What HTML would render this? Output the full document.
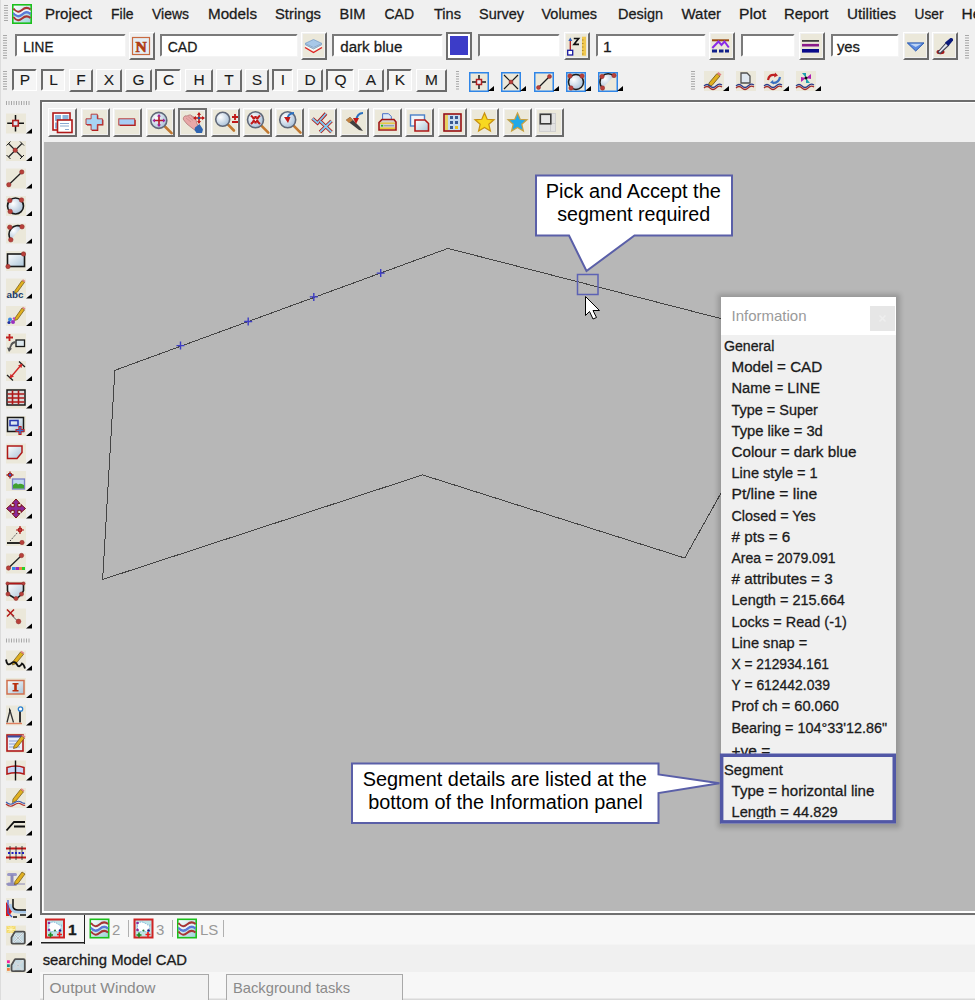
<!DOCTYPE html><html><head><meta charset="utf-8"><style>html,body{margin:0;padding:0;background:#f0f0f0;overflow:hidden}svg{display:block}text{font-family:"Liberation Sans",sans-serif}</style></head><body>
<svg width="975" height="1000" viewBox="0 0 975 1000">
<defs><linearGradient id="gb" x1="0" y1="0" x2="1" y2="1"><stop offset="0" stop-color="#ffffff"/><stop offset="1" stop-color="#a9c4d8"/></linearGradient><radialGradient id="gs" cx="0.35" cy="0.35" r="0.7"><stop offset="0" stop-color="#ffffff"/><stop offset="1" stop-color="#a8c0d8"/></radialGradient><linearGradient id="gw" x1="0" y1="0" x2="1" y2="1"><stop offset="0" stop-color="#ffffff"/><stop offset="1" stop-color="#9ad0d8"/></linearGradient><filter id="sh" x="-10%" y="-10%" width="120%" height="120%"><feGaussianBlur stdDeviation="2.5"/></filter></defs>
<rect x="0" y="0" width="975" height="1000" fill="#f0f0f0"/>
<rect x="0" y="0" width="1" height="1000" fill="#dcdcdc"/>
<rect x="4" y="5" width="4" height="1" fill="#a8a8a8"/>
<rect x="4" y="7.5" width="4" height="1" fill="#a8a8a8"/>
<rect x="4" y="10.0" width="4" height="1" fill="#a8a8a8"/>
<rect x="4" y="12.5" width="4" height="1" fill="#a8a8a8"/>
<rect x="4" y="15.0" width="4" height="1" fill="#a8a8a8"/>
<rect x="4" y="17.5" width="4" height="1" fill="#a8a8a8"/>
<rect x="4" y="20.0" width="4" height="1" fill="#a8a8a8"/>
<g transform="translate(12 4) scale(1.0)"><rect x="0.8" y="0.8" width="18.4" height="18.4" fill="url(#gw)" stroke="#1cc01c" stroke-width="1.6"/><path d="M1.5 4.5Q5.5 10 10 6T18.5 5.5" fill="none" stroke="#a83434" stroke-width="2"/><path d="M1.5 9Q5.5 14.5 10 10.5T18.5 10" fill="none" stroke="#5a7ad8" stroke-width="2.4"/><path d="M1.5 6.8Q5.5 12.3 10 8.3T18.5 7.8" fill="none" stroke="#f4f4f4" stroke-width="1.2"/><path d="M1.5 13Q5.5 18.5 10 14.5T18.5 14" fill="none" stroke="#a83434" stroke-width="2"/></g>
<text x="45" y="19" font-size="15.5" fill="#1b1b1b" stroke="#1b1b1b" stroke-width="0.3" textLength="47" lengthAdjust="spacingAndGlyphs">Project</text>
<text x="111" y="19" font-size="15.5" fill="#1b1b1b" stroke="#1b1b1b" stroke-width="0.3" textLength="22.5" lengthAdjust="spacingAndGlyphs">File</text>
<text x="152" y="19" font-size="15.5" fill="#1b1b1b" stroke="#1b1b1b" stroke-width="0.3" textLength="37" lengthAdjust="spacingAndGlyphs">Views</text>
<text x="208" y="19" font-size="15.5" fill="#1b1b1b" stroke="#1b1b1b" stroke-width="0.3" textLength="49" lengthAdjust="spacingAndGlyphs">Models</text>
<text x="275" y="19" font-size="15.5" fill="#1b1b1b" stroke="#1b1b1b" stroke-width="0.3" textLength="46" lengthAdjust="spacingAndGlyphs">Strings</text>
<text x="339.5" y="19" font-size="15.5" fill="#1b1b1b" stroke="#1b1b1b" stroke-width="0.3" textLength="26" lengthAdjust="spacingAndGlyphs">BIM</text>
<text x="384.5" y="19" font-size="15.5" fill="#1b1b1b" stroke="#1b1b1b" stroke-width="0.3" textLength="29.5" lengthAdjust="spacingAndGlyphs">CAD</text>
<text x="434" y="19" font-size="15.5" fill="#1b1b1b" stroke="#1b1b1b" stroke-width="0.3" textLength="27" lengthAdjust="spacingAndGlyphs">Tins</text>
<text x="479" y="19" font-size="15.5" fill="#1b1b1b" stroke="#1b1b1b" stroke-width="0.3" textLength="45" lengthAdjust="spacingAndGlyphs">Survey</text>
<text x="541.5" y="19" font-size="15.5" fill="#1b1b1b" stroke="#1b1b1b" stroke-width="0.3" textLength="55.5" lengthAdjust="spacingAndGlyphs">Volumes</text>
<text x="618" y="19" font-size="15.5" fill="#1b1b1b" stroke="#1b1b1b" stroke-width="0.3" textLength="45" lengthAdjust="spacingAndGlyphs">Design</text>
<text x="681.5" y="19" font-size="15.5" fill="#1b1b1b" stroke="#1b1b1b" stroke-width="0.3" textLength="39.5" lengthAdjust="spacingAndGlyphs">Water</text>
<text x="739" y="19" font-size="15.5" fill="#1b1b1b" stroke="#1b1b1b" stroke-width="0.3" textLength="27" lengthAdjust="spacingAndGlyphs">Plot</text>
<text x="784" y="19" font-size="15.5" fill="#1b1b1b" stroke="#1b1b1b" stroke-width="0.3" textLength="44.5" lengthAdjust="spacingAndGlyphs">Report</text>
<text x="847" y="19" font-size="15.5" fill="#1b1b1b" stroke="#1b1b1b" stroke-width="0.3" textLength="49" lengthAdjust="spacingAndGlyphs">Utilities</text>
<text x="914.5" y="19" font-size="15.5" fill="#1b1b1b" stroke="#1b1b1b" stroke-width="0.3" textLength="29" lengthAdjust="spacingAndGlyphs">User</text>
<text x="961.5" y="19" font-size="15.5" fill="#1b1b1b" stroke="#1b1b1b" stroke-width="0.3">Help</text>
<rect x="3" y="35" width="4" height="1" fill="#a8a8a8"/>
<rect x="3" y="37.5" width="4" height="1" fill="#a8a8a8"/>
<rect x="3" y="40.0" width="4" height="1" fill="#a8a8a8"/>
<rect x="3" y="42.5" width="4" height="1" fill="#a8a8a8"/>
<rect x="3" y="45.0" width="4" height="1" fill="#a8a8a8"/>
<rect x="3" y="47.5" width="4" height="1" fill="#a8a8a8"/>
<rect x="3" y="50.0" width="4" height="1" fill="#a8a8a8"/>
<rect x="3" y="52.5" width="4" height="1" fill="#a8a8a8"/>
<rect x="3" y="55.0" width="4" height="1" fill="#a8a8a8"/>
<rect x="3" y="57.5" width="4" height="1" fill="#a8a8a8"/>
<rect x="15" y="34" width="111" height="23" fill="#ffffff"/>
<path d="M15 57V34H126l-2 2H17V55z" fill="#7a7a7a"/>
<path d="M126 34V57H15l1 -1H125V35z" fill="#f4f4f4"/>
<text x="23.3" y="51.5" font-size="15.5" fill="#1b1b1b" stroke="#1b1b1b" stroke-width="0.3" textLength="30.2" lengthAdjust="spacingAndGlyphs">LINE</text>
<rect x="129" y="32" width="26" height="28" fill="#f0f0f0"/>
<rect x="129" y="32" width="26" height="1" fill="#ffffff"/>
<rect x="129" y="32" width="1" height="28" fill="#ffffff"/>
<path d="M155 32V60H129l2 -2H153V34z" fill="#6b6b6b"/>
<g transform="translate(132 37) scale(1.0)"><rect x="0.5" y="0.5" width="17" height="17" fill="#e4eef4" stroke="#c86a40" stroke-width="1.2"/><text x="9" y="15" font-size="15.5" font-weight="bold" fill="#b03c14" stroke="#b03c14" stroke-width="0.7" text-anchor="middle" style="font-family:'Liberation Serif',serif">N</text></g>
<rect x="160" y="34" width="138" height="23" fill="#ffffff"/>
<path d="M160 57V34H298l-2 2H162V55z" fill="#7a7a7a"/>
<path d="M298 34V57H160l1 -1H297V35z" fill="#f4f4f4"/>
<text x="167.7" y="51.5" font-size="15.5" fill="#1b1b1b" stroke="#1b1b1b" stroke-width="0.3" textLength="29.7" lengthAdjust="spacingAndGlyphs">CAD</text>
<rect x="301" y="32" width="26" height="28" fill="#f0f0f0"/>
<rect x="301" y="32" width="26" height="1" fill="#ffffff"/>
<rect x="301" y="32" width="1" height="28" fill="#ffffff"/>
<path d="M327 32V60H301l2 -2H325V34z" fill="#6b6b6b"/>
<rect x="303" y="34" width="21" height="23" fill="#ebe8da"/>
<g transform="translate(304 36) scale(1.0)"><path d="M1 11.5L9.5 16.5L18 11.5" fill="none" stroke="#e02020" stroke-width="1.4"/><path d="M1 9.5L9.5 14.3L18 9.5" fill="none" stroke="#ffffff" stroke-width="1"/><path d="M1 7.5L9.5 3.5L18 7.5L9.5 11.5Z" fill="#a8c8e8" stroke="#7aa0c8" stroke-width="0.8"/><path d="M1 8.5L9.5 12.8L18 8.5" fill="none" stroke="#7aa0c8" stroke-width="1"/></g>
<rect x="332" y="34" width="111" height="23" fill="#ffffff"/>
<path d="M332 57V34H443l-2 2H334V55z" fill="#7a7a7a"/>
<path d="M443 34V57H332l1 -1H442V35z" fill="#f4f4f4"/>
<text x="340.3" y="51.5" font-size="15.5" fill="#1b1b1b" stroke="#1b1b1b" stroke-width="0.3" textLength="62" lengthAdjust="spacingAndGlyphs">dark blue</text>
<rect x="446" y="32" width="26" height="28" fill="#6e6e6e"/>
<rect x="448" y="34" width="22" height="24" fill="#ffffff"/>
<rect x="450" y="36" width="18" height="19" fill="#3c3cc8"/>
<rect x="478" y="34" width="82" height="23" fill="#ffffff"/>
<path d="M478 57V34H560l-2 2H480V55z" fill="#7a7a7a"/>
<path d="M560 34V57H478l1 -1H559V35z" fill="#f4f4f4"/>
<rect x="564" y="32" width="26" height="28" fill="#f0f0f0"/>
<rect x="564" y="32" width="26" height="1" fill="#ffffff"/>
<rect x="564" y="32" width="1" height="28" fill="#ffffff"/>
<path d="M590 32V60H564l2 -2H588V34z" fill="#6b6b6b"/>
<rect x="566" y="34" width="21" height="23" fill="#ebe8da"/>
<g transform="translate(566 36) scale(1.0)"><path d="M4.3 15V4" stroke="#b02020" stroke-width="1.3"/><path d="M2.3 5L4.3 1.5L6.3 5Z" fill="#3060c0"/><rect x="1.7" y="14.3" width="5" height="4.7" fill="#ffffff" stroke="#1a1aa0" stroke-width="1.3"/><path d="M7.8 2.5H12.6L8 8.3H13" fill="none" stroke="#111" stroke-width="1.7"/><rect x="16" y="0.7" width="4" height="19" fill="#f0c850"/><path d="M16 4H17.5M16 7.5H17.5M16 11H17.5M16 14.5H17.5M16 18H17.5" stroke="#a07820" stroke-width="0.8"/></g>
<rect x="596" y="34" width="110" height="23" fill="#ffffff"/>
<path d="M596 57V34H706l-2 2H598V55z" fill="#7a7a7a"/>
<path d="M706 34V57H596l1 -1H705V35z" fill="#f4f4f4"/>
<text x="603" y="51.5" font-size="15.5" fill="#1b1b1b" stroke="#1b1b1b" stroke-width="0.3">1</text>
<rect x="709" y="32" width="26" height="28" fill="#f0f0f0"/>
<rect x="709" y="32" width="26" height="1" fill="#ffffff"/>
<rect x="709" y="32" width="1" height="28" fill="#ffffff"/>
<path d="M735 32V60H709l2 -2H733V34z" fill="#6b6b6b"/>
<rect x="711" y="34" width="21" height="23" fill="#ebe8da"/>
<g transform="translate(712 36) scale(1.0)"><rect x="0" y="3.3" width="17" height="2" fill="#9a4a10"/><path d="M0.3 12L6.5 5.5L9.5 9L12.5 5.5L16.8 11.5" fill="none" stroke="#8a2ae8" stroke-width="2"/><path d="M0 15H5M7 15H11.5M13 15H17" stroke="#10208a" stroke-width="3"/></g>
<rect x="741" y="34" width="54" height="23" fill="#ffffff"/>
<path d="M741 57V34H795l-2 2H743V55z" fill="#7a7a7a"/>
<path d="M795 34V57H741l1 -1H794V35z" fill="#f4f4f4"/>
<rect x="799" y="32" width="26" height="28" fill="#f0f0f0"/>
<rect x="799" y="32" width="26" height="1" fill="#ffffff"/>
<rect x="799" y="32" width="1" height="28" fill="#ffffff"/>
<path d="M825 32V60H799l2 -2H823V34z" fill="#6b6b6b"/>
<rect x="801" y="34" width="21" height="23" fill="#ebe8da"/>
<g transform="translate(802 36) scale(1.0)"><rect x="0" y="4" width="17" height="1.8" fill="#404040"/><rect x="0" y="7.9" width="17" height="2.6" fill="#8a1a8a"/><rect x="0" y="13" width="17" height="3.6" fill="#0a0a8a"/></g>
<rect x="831" y="34" width="68" height="23" fill="#ffffff"/>
<path d="M831 57V34H899l-2 2H833V55z" fill="#7a7a7a"/>
<path d="M899 34V57H831l1 -1H898V35z" fill="#f4f4f4"/>
<text x="836.9" y="51.5" font-size="15.5" fill="#1b1b1b" stroke="#1b1b1b" stroke-width="0.3" textLength="23.1" lengthAdjust="spacingAndGlyphs">yes</text>
<rect x="903" y="32" width="26" height="28" fill="#f0f0f0"/>
<rect x="903" y="32" width="26" height="1" fill="#ffffff"/>
<rect x="903" y="32" width="1" height="28" fill="#ffffff"/>
<path d="M929 32V60H903l2 -2H927V34z" fill="#6b6b6b"/>
<rect x="905" y="34" width="21" height="23" fill="#ebe8da"/>
<g transform="translate(906 36) scale(1.0)"><path d="M1.3 6.9H18L9.7 15Z" fill="#5a8ae0" stroke="#2a5ab0" stroke-width="1"/><path d="M4 7.8H15.5L9.7 11Z" fill="#bcd4f4"/></g>
<rect x="932" y="32" width="26" height="28" fill="#f0f0f0"/>
<rect x="932" y="32" width="26" height="1" fill="#ffffff"/>
<rect x="932" y="32" width="1" height="28" fill="#ffffff"/>
<path d="M958 32V60H932l2 -2H956V34z" fill="#6b6b6b"/>
<rect x="934" y="34" width="21" height="23" fill="#ebe8da"/>
<g transform="translate(935 36) scale(1.0)"><ellipse cx="5.5" cy="16" rx="4" ry="2.2" fill="#a81818"/><path d="M3 16L11 7L13.5 9.5L5 17.5Z" fill="#e0e4f0" stroke="#404050" stroke-width="1.1"/><path d="M10 6.5L15.5 2Q18.5 1.5 18 4.5L13.5 10Z" fill="#0c1a7a"/></g>
<rect x="965" y="35" width="4" height="1" fill="#a8a8a8"/>
<rect x="965" y="37.5" width="4" height="1" fill="#a8a8a8"/>
<rect x="965" y="40.0" width="4" height="1" fill="#a8a8a8"/>
<rect x="965" y="42.5" width="4" height="1" fill="#a8a8a8"/>
<rect x="965" y="45.0" width="4" height="1" fill="#a8a8a8"/>
<rect x="965" y="47.5" width="4" height="1" fill="#a8a8a8"/>
<rect x="965" y="50.0" width="4" height="1" fill="#a8a8a8"/>
<rect x="965" y="52.5" width="4" height="1" fill="#a8a8a8"/>
<rect x="965" y="55.0" width="4" height="1" fill="#a8a8a8"/>
<rect x="965" y="57.5" width="4" height="1" fill="#a8a8a8"/>
<rect x="3" y="71" width="4" height="1" fill="#a8a8a8"/>
<rect x="3" y="73.5" width="4" height="1" fill="#a8a8a8"/>
<rect x="3" y="76.0" width="4" height="1" fill="#a8a8a8"/>
<rect x="3" y="78.5" width="4" height="1" fill="#a8a8a8"/>
<rect x="3" y="81.0" width="4" height="1" fill="#a8a8a8"/>
<rect x="3" y="83.5" width="4" height="1" fill="#a8a8a8"/>
<rect x="3" y="86.0" width="4" height="1" fill="#a8a8a8"/>
<rect x="3" y="88.5" width="4" height="1" fill="#a8a8a8"/>
<rect x="12" y="69" width="25" height="22" fill="#f5f5f5"/>
<path d="M12 91V69H37l-2 2H14V89z" fill="#6b6b6b"/>
<path d="M37 69V91H12l1 -1H36V70z" fill="#ffffff"/>
<text x="25.0" y="85.3" font-size="15.5" fill="#1b1b1b" stroke="#1b1b1b" stroke-width="0.12" text-anchor="middle">P</text>
<rect x="41" y="69" width="24" height="22" fill="#f5f5f5"/>
<path d="M41 91V69H65l-2 2H43V89z" fill="#6b6b6b"/>
<path d="M65 69V91H41l1 -1H64V70z" fill="#ffffff"/>
<text x="53.5" y="85.3" font-size="15.5" fill="#1b1b1b" stroke="#1b1b1b" stroke-width="0.12" text-anchor="middle">L</text>
<rect x="69" y="69" width="24" height="23" fill="#f0f0f0"/>
<rect x="69" y="69" width="24" height="1" fill="#ffffff"/>
<rect x="69" y="69" width="1" height="23" fill="#ffffff"/>
<path d="M93 69V92H69l2 -2H91V71z" fill="#6b6b6b"/>
<text x="81.0" y="85.3" font-size="15.5" fill="#1b1b1b" stroke="#1b1b1b" stroke-width="0.12" text-anchor="middle">F</text>
<rect x="96" y="69" width="26" height="23" fill="#f0f0f0"/>
<rect x="96" y="69" width="26" height="1" fill="#ffffff"/>
<rect x="96" y="69" width="1" height="23" fill="#ffffff"/>
<path d="M122 69V92H96l2 -2H120V71z" fill="#6b6b6b"/>
<text x="109.0" y="85.3" font-size="15.5" fill="#1b1b1b" stroke="#1b1b1b" stroke-width="0.12" text-anchor="middle">X</text>
<rect x="125" y="69" width="27" height="23" fill="#f0f0f0"/>
<rect x="125" y="69" width="27" height="1" fill="#ffffff"/>
<rect x="125" y="69" width="1" height="23" fill="#ffffff"/>
<path d="M152 69V92H125l2 -2H150V71z" fill="#6b6b6b"/>
<text x="138.5" y="85.3" font-size="15.5" fill="#1b1b1b" stroke="#1b1b1b" stroke-width="0.12" text-anchor="middle">G</text>
<rect x="155" y="69" width="26" height="22" fill="#f5f5f5"/>
<path d="M155 91V69H181l-2 2H157V89z" fill="#6b6b6b"/>
<path d="M181 69V91H155l1 -1H180V70z" fill="#ffffff"/>
<text x="168.5" y="85.3" font-size="15.5" fill="#1b1b1b" stroke="#1b1b1b" stroke-width="0.12" text-anchor="middle">C</text>
<rect x="185" y="69" width="28" height="23" fill="#f0f0f0"/>
<rect x="185" y="69" width="28" height="1" fill="#ffffff"/>
<rect x="185" y="69" width="1" height="23" fill="#ffffff"/>
<path d="M213 69V92H185l2 -2H211V71z" fill="#6b6b6b"/>
<text x="199.0" y="85.3" font-size="15.5" fill="#1b1b1b" stroke="#1b1b1b" stroke-width="0.12" text-anchor="middle">H</text>
<rect x="216" y="69" width="26" height="23" fill="#f0f0f0"/>
<rect x="216" y="69" width="26" height="1" fill="#ffffff"/>
<rect x="216" y="69" width="1" height="23" fill="#ffffff"/>
<path d="M242 69V92H216l2 -2H240V71z" fill="#6b6b6b"/>
<text x="229.0" y="85.3" font-size="15.5" fill="#1b1b1b" stroke="#1b1b1b" stroke-width="0.12" text-anchor="middle">T</text>
<rect x="245" y="69" width="24" height="23" fill="#f0f0f0"/>
<rect x="245" y="69" width="24" height="1" fill="#ffffff"/>
<rect x="245" y="69" width="1" height="23" fill="#ffffff"/>
<path d="M269 69V92H245l2 -2H267V71z" fill="#6b6b6b"/>
<text x="257.0" y="85.3" font-size="15.5" fill="#1b1b1b" stroke="#1b1b1b" stroke-width="0.12" text-anchor="middle">S</text>
<rect x="272" y="69" width="21" height="22" fill="#f5f5f5"/>
<path d="M272 91V69H293l-2 2H274V89z" fill="#6b6b6b"/>
<path d="M293 69V91H272l1 -1H292V70z" fill="#ffffff"/>
<text x="283.0" y="85.3" font-size="15.5" fill="#1b1b1b" stroke="#1b1b1b" stroke-width="0.12" text-anchor="middle">I</text>
<rect x="297" y="69" width="26" height="23" fill="#f0f0f0"/>
<rect x="297" y="69" width="26" height="1" fill="#ffffff"/>
<rect x="297" y="69" width="1" height="23" fill="#ffffff"/>
<path d="M323 69V92H297l2 -2H321V71z" fill="#6b6b6b"/>
<text x="310.0" y="85.3" font-size="15.5" fill="#1b1b1b" stroke="#1b1b1b" stroke-width="0.12" text-anchor="middle">D</text>
<rect x="326" y="69" width="28" height="22" fill="#f5f5f5"/>
<path d="M326 91V69H354l-2 2H328V89z" fill="#6b6b6b"/>
<path d="M354 69V91H326l1 -1H353V70z" fill="#ffffff"/>
<text x="340.5" y="85.3" font-size="15.5" fill="#1b1b1b" stroke="#1b1b1b" stroke-width="0.12" text-anchor="middle">Q</text>
<rect x="358" y="69" width="26" height="23" fill="#f0f0f0"/>
<rect x="358" y="69" width="26" height="1" fill="#ffffff"/>
<rect x="358" y="69" width="1" height="23" fill="#ffffff"/>
<path d="M384 69V92H358l2 -2H382V71z" fill="#6b6b6b"/>
<text x="371.0" y="85.3" font-size="15.5" fill="#1b1b1b" stroke="#1b1b1b" stroke-width="0.12" text-anchor="middle">A</text>
<rect x="387" y="69" width="25" height="22" fill="#f5f5f5"/>
<path d="M387 91V69H412l-2 2H389V89z" fill="#6b6b6b"/>
<path d="M412 69V91H387l1 -1H411V70z" fill="#ffffff"/>
<text x="400.0" y="85.3" font-size="15.5" fill="#1b1b1b" stroke="#1b1b1b" stroke-width="0.12" text-anchor="middle">K</text>
<rect x="416" y="69" width="31" height="23" fill="#f0f0f0"/>
<rect x="416" y="69" width="31" height="1" fill="#ffffff"/>
<rect x="416" y="69" width="1" height="23" fill="#ffffff"/>
<path d="M447 69V92H416l2 -2H445V71z" fill="#6b6b6b"/>
<text x="431.5" y="85.3" font-size="15.5" fill="#1b1b1b" stroke="#1b1b1b" stroke-width="0.12" text-anchor="middle">M</text>
<rect x="456" y="71" width="3" height="1" fill="#a8a8a8"/>
<rect x="456" y="73.5" width="3" height="1" fill="#a8a8a8"/>
<rect x="456" y="76.0" width="3" height="1" fill="#a8a8a8"/>
<rect x="456" y="78.5" width="3" height="1" fill="#a8a8a8"/>
<rect x="456" y="81.0" width="3" height="1" fill="#a8a8a8"/>
<rect x="456" y="83.5" width="3" height="1" fill="#a8a8a8"/>
<rect x="456" y="86.0" width="3" height="1" fill="#a8a8a8"/>
<rect x="456" y="88.5" width="3" height="1" fill="#a8a8a8"/>
<g transform="translate(469 72) scale(1.0)"><rect x="0.75" y="0.75" width="18.5" height="18.5" fill="#ebe8da" stroke="#2f86e8" stroke-width="1.5"/><path d="M3 10H17M10 3V17" stroke="#1a1a1a" stroke-width="1.5"/><rect x="7.5" y="7.5" width="5" height="5" fill="#f0f4f8" stroke="#b02020" stroke-width="1.5"/></g>
<path d="M494 91H488L494 86z" fill="#000"/>
<g transform="translate(501 72) scale(1.0)"><rect x="0.75" y="0.75" width="18.5" height="18.5" fill="#ebe8da" stroke="#2f86e8" stroke-width="1.5"/><path d="M3 3L17 17M17 3L3 17" stroke="#1a1a1a" stroke-width="1.2"/><circle cx="10" cy="10" r="2" fill="#b8403a" stroke="#8a2a2a" stroke-width="0.5"/></g>
<path d="M526 91H520L526 86z" fill="#000"/>
<g transform="translate(534 72) scale(1.0)"><rect x="0.75" y="0.75" width="18.5" height="18.5" fill="#ebe8da" stroke="#2f86e8" stroke-width="1.5"/><path d="M4.5 15.5L15.5 4.5" stroke="#1a1a1a" stroke-width="1.3"/><circle cx="4.5" cy="15.5" r="2" fill="#b8403a" stroke="#8a2a2a" stroke-width="0.5"/><circle cx="15.5" cy="4.5" r="2" fill="#b8403a" stroke="#8a2a2a" stroke-width="0.5"/></g>
<path d="M559 91H553L559 86z" fill="#000"/>
<g transform="translate(566 72) scale(1.0)"><rect x="0.75" y="0.75" width="18.5" height="18.5" fill="#ebe8da" stroke="#2f86e8" stroke-width="1.5"/><circle cx="10" cy="10" r="7.5" fill="url(#gs)" stroke="#1a1a1a" stroke-width="1.5"/><circle cx="4" cy="4" r="2.2" fill="#b8403a" stroke="#8a2a2a" stroke-width="0.5"/><circle cx="16" cy="4" r="2.2" fill="#b8403a" stroke="#8a2a2a" stroke-width="0.5"/><circle cx="5" cy="16" r="2.2" fill="#b8403a" stroke="#8a2a2a" stroke-width="0.5"/></g>
<path d="M591 91H585L591 86z" fill="#000"/>
<g transform="translate(598 72) scale(1.0)"><rect x="0.75" y="0.75" width="18.5" height="18.5" fill="#ebe8da" stroke="#2f86e8" stroke-width="1.5"/><path d="M4.5 16A8.3 8.3 0 0 1 16 4Z" fill="url(#gs)"/><path d="M4.5 16A8.3 8.3 0 0 1 16 4" fill="none" stroke="#1a1a1a" stroke-width="1.5"/><circle cx="4" cy="4.5" r="2.2" fill="#b8403a" stroke="#8a2a2a" stroke-width="0.5"/><circle cx="16" cy="3.5" r="2.2" fill="#b8403a" stroke="#8a2a2a" stroke-width="0.5"/><circle cx="4.5" cy="16" r="2.2" fill="#b8403a" stroke="#8a2a2a" stroke-width="0.5"/></g>
<path d="M623 91H617L623 86z" fill="#000"/>
<rect x="691" y="71" width="4" height="1" fill="#a8a8a8"/>
<rect x="691" y="73.5" width="4" height="1" fill="#a8a8a8"/>
<rect x="691" y="76.0" width="4" height="1" fill="#a8a8a8"/>
<rect x="691" y="78.5" width="4" height="1" fill="#a8a8a8"/>
<rect x="691" y="81.0" width="4" height="1" fill="#a8a8a8"/>
<rect x="691" y="83.5" width="4" height="1" fill="#a8a8a8"/>
<rect x="691" y="86.0" width="4" height="1" fill="#a8a8a8"/>
<rect x="691" y="88.5" width="4" height="1" fill="#a8a8a8"/>
<g transform="translate(704 71) scale(1.0)"><rect x="0" y="0" width="20" height="20" fill="#ebe8da"/><path d="M5 12L13 2.5L16 5L8 14.5L4.5 15.5Z" fill="#e0b020" stroke="#6a5010" stroke-width="0.8"/><path d="M13 2.5L14.5 1L17.5 3.5L16 5Z" fill="#e08080"/><path d="M0 15Q3 12 6 15T12 15T18 14" fill="none" stroke="#2a3a8a" stroke-width="1.2"/><path d="M0 17Q3 14 6 17T12 17T18 16" fill="none" stroke="#a02a2a" stroke-width="1.2"/></g>
<path d="M729 91H723L729 86z" fill="#000"/>
<g transform="translate(736 71) scale(1.0)"><rect x="0" y="0" width="20" height="20" fill="#ebe8da"/><path d="M5 2H11L14 5V12H5Z" fill="#e0e8f0" stroke="#505050" stroke-width="1.3"/><path d="M0 15Q3 12 6 15T12 15T18 14" fill="none" stroke="#2a3a8a" stroke-width="1.2"/><path d="M0 17Q3 14 6 17T12 17T18 16" fill="none" stroke="#a02a2a" stroke-width="1.2"/></g>
<g transform="translate(764 71) scale(1.0)"><rect x="0" y="0" width="20" height="20" fill="#ebe8da"/><path d="M4 9Q5 3 11 4" fill="none" stroke="#c02020" stroke-width="2.2"/><path d="M11 1.5L14 4.5L10 6.5Z" fill="#c02020"/><path d="M16 6Q15 12 9 12" fill="none" stroke="#3a70c0" stroke-width="2.2"/><path d="M9 9L6 11.5L10 13.5Z" fill="#3a70c0"/><path d="M0 15Q3 12 6 15T12 15T18 14" fill="none" stroke="#2a3a8a" stroke-width="1.2"/><path d="M0 17Q3 14 6 17T12 17T18 16" fill="none" stroke="#a02a2a" stroke-width="1.2"/></g>
<path d="M789 91H783L789 86z" fill="#000"/>
<g transform="translate(796 71) scale(1.0)"><rect x="0" y="0" width="20" height="20" fill="#ebe8da"/><path d="M10 7L6 2H10Z" fill="#20a0b0"/><path d="M10 7L15 3V8Z" fill="#b020b0"/><path d="M10 7L5 11V6Z" fill="#b020b0"/><path d="M10 7L14 12H10Z" fill="#20a0b0"/><circle cx="10" cy="7" r="1.5" fill="#111"/><path d="M0 15Q3 12 6 15T12 15T18 14" fill="none" stroke="#2a3a8a" stroke-width="1.2"/><path d="M0 17Q3 14 6 17T12 17T18 16" fill="none" stroke="#a02a2a" stroke-width="1.2"/></g>
<path d="M821 91H815L821 86z" fill="#000"/>
<rect x="6" y="101" width="1" height="4" fill="#a8a8a8"/>
<rect x="8.5" y="101" width="1" height="4" fill="#a8a8a8"/>
<rect x="11.0" y="101" width="1" height="4" fill="#a8a8a8"/>
<rect x="13.5" y="101" width="1" height="4" fill="#a8a8a8"/>
<rect x="16.0" y="101" width="1" height="4" fill="#a8a8a8"/>
<rect x="18.5" y="101" width="1" height="4" fill="#a8a8a8"/>
<rect x="21.0" y="101" width="1" height="4" fill="#a8a8a8"/>
<rect x="23.5" y="101" width="1" height="4" fill="#a8a8a8"/>
<rect x="26.0" y="101" width="1" height="4" fill="#a8a8a8"/>
<rect x="28.5" y="101" width="1" height="4" fill="#a8a8a8"/>
<rect x="6" y="113.5" width="20" height="20" fill="#ebe8da"/>
<g transform="translate(6 113.5) scale(1.0)"><path d="M1.2 9.8H18M9.5 1.5V18" stroke="#111" stroke-width="1.5"/><rect x="6.8" y="7" width="5.5" height="5.5" fill="#dde8f4" stroke="#b02020" stroke-width="1.6"/></g>
<path d="M32 133.5H26L32 128.5z" fill="#000"/>
<rect x="6" y="141.0" width="20" height="20" fill="#ebe8da"/>
<g transform="translate(6 141.0) scale(1.0)"><path d="M2.5 2.5L16 16M16 2.5L2.5 16" stroke="#222" stroke-width="1.2"/><path d="M0.5 4.5L4.5 0.5M14 0.5L18 4.5M0.5 14L4.5 18M14 18L18 14" stroke="#222" stroke-width="1"/><circle cx="9.2" cy="9.2" r="2.2" fill="#b8403a" stroke="#8a2a2a" stroke-width="0.5"/></g>
<path d="M32 161.0H26L32 156.0z" fill="#000"/>
<rect x="6" y="168.5" width="20" height="20" fill="#ebe8da"/>
<g transform="translate(6 168.5) scale(1.0)"><path d="M2.5 16.5L16 3.5" stroke="#222" stroke-width="1.3"/><circle cx="2.8" cy="16.2" r="2.2" fill="#b8403a" stroke="#8a2a2a" stroke-width="0.5"/><circle cx="15.8" cy="3.5" r="2.2" fill="#b8403a" stroke="#8a2a2a" stroke-width="0.5"/></g>
<path d="M32 188.5H26L32 183.5z" fill="#000"/>
<rect x="6" y="196.0" width="20" height="20" fill="#ebe8da"/>
<g transform="translate(6 196.0) scale(1.0)"><circle cx="9.5" cy="10" r="8" fill="url(#gs)" stroke="#1a1a1a" stroke-width="1.6"/><circle cx="3.8" cy="4.5" r="2.3" fill="#b8403a" stroke="#8a2a2a" stroke-width="0.5"/><circle cx="15.5" cy="4" r="2.3" fill="#b8403a" stroke="#8a2a2a" stroke-width="0.5"/><circle cx="4.2" cy="15.5" r="2.3" fill="#b8403a" stroke="#8a2a2a" stroke-width="0.5"/></g>
<path d="M32 216.0H26L32 211.0z" fill="#000"/>
<rect x="6" y="223.5" width="20" height="20" fill="#ebe8da"/>
<g transform="translate(6 223.5) scale(1.0)"><path d="M4.8 16.3A8.8 8.8 0 0 1 16 3.2Z" fill="url(#gs)"/><path d="M4.8 16.3A8.8 8.8 0 0 1 16 3.2" fill="none" stroke="#1a1a1a" stroke-width="1.6"/><circle cx="3.8" cy="3.8" r="2.3" fill="#b8403a" stroke="#8a2a2a" stroke-width="0.5"/><circle cx="16" cy="3.2" r="2.3" fill="#b8403a" stroke="#8a2a2a" stroke-width="0.5"/><circle cx="4.8" cy="16.3" r="2.3" fill="#b8403a" stroke="#8a2a2a" stroke-width="0.5"/></g>
<path d="M32 243.5H26L32 238.5z" fill="#000"/>
<rect x="6" y="251.0" width="20" height="20" fill="#ebe8da"/>
<g transform="translate(6 251.0) scale(1.0)"><rect x="1.5" y="3" width="17" height="12.5" fill="url(#gb)" stroke="#1a1a1a" stroke-width="1.6"/><circle cx="17.5" cy="3" r="2.2" fill="#b8403a" stroke="#8a2a2a" stroke-width="0.5"/><circle cx="2" cy="15.5" r="2.2" fill="#b8403a" stroke="#8a2a2a" stroke-width="0.5"/></g>
<path d="M32 271.0H26L32 266.0z" fill="#000"/>
<rect x="6" y="278.5" width="20" height="20" fill="#ebe8da"/>
<g transform="translate(6 278.5) scale(1.0)"><path d="M9 12L16 2L18.5 3.8L11.5 13.5L8.5 14.5Z" fill="#e0b020" stroke="#6a5010" stroke-width="0.7"/><path d="M16 2L17 0.8L19.5 2.6L18.5 3.8Z" fill="#e08888"/><text x="0.5" y="19" font-size="9" font-weight="bold" fill="#1a3a6a" textLength="17" lengthAdjust="spacingAndGlyphs">abc</text></g>
<path d="M32 298.5H26L32 293.5z" fill="#000"/>
<rect x="6" y="306.0" width="20" height="20" fill="#ebe8da"/>
<g transform="translate(6 306.0) scale(1.0)"><path d="M9 12L16 2L18.5 3.8L11.5 13.5L8.5 14.5Z" fill="#e0b020" stroke="#6a5010" stroke-width="0.7"/><path d="M16 2L17 0.8L19.5 2.6L18.5 3.8Z" fill="#e08888"/><circle cx="4" cy="13.5" r="2" fill="#3a8ae0"/><circle cx="7" cy="16" r="2" fill="#9a30c0"/><circle cx="3" cy="16.5" r="1.6" fill="#2030a0"/><circle cx="8" cy="12.5" r="1.2" fill="#c040c0"/></g>
<path d="M32 326.0H26L32 321.0z" fill="#000"/>
<rect x="6" y="333.5" width="20" height="20" fill="#ebe8da"/>
<g transform="translate(6 333.5) scale(1.0)"><path d="M3.5 0.5V7.5M0 4H7" stroke="#c02020" stroke-width="1.8"/><rect x="10" y="6.5" width="8.5" height="6.5" fill="#dde8ee" stroke="#1a1a1a" stroke-width="1.3"/><path d="M9.5 8.5Q6 9 5 12L3 17" fill="none" stroke="#555" stroke-width="1.8"/><path d="M1 14L3 18.5L6 15Z" fill="#555"/></g>
<path d="M32 353.5H26L32 348.5z" fill="#000"/>
<rect x="6" y="361.0" width="20" height="20" fill="#ebe8da"/>
<g transform="translate(6 361.0) scale(1.0)"><path d="M1 14L7 19.5M13 0.5L19 6" stroke="#222" stroke-width="1.3"/><path d="M4.5 16.5L15.5 3.5" stroke="#d02828" stroke-width="1.4"/><path d="M3.5 17.5L4.5 13L8 15.5Z" fill="#d02828"/><path d="M16.5 2.5L15.5 7L12 4.5Z" fill="#d02828"/></g>
<path d="M32 381.0H26L32 376.0z" fill="#000"/>
<rect x="6" y="388.5" width="20" height="20" fill="#ebe8da"/>
<g transform="translate(6 388.5) scale(1.0)"><rect x="1" y="1.5" width="18" height="15" fill="#d8d8d8" stroke="#1a1a1a" stroke-width="1.5"/><path d="M1.5 5.5H18.5M1.5 9.5H18.5M1.5 13.5H18.5" stroke="#b01818" stroke-width="1.6"/><path d="M6.5 2V16M12.5 2V16" stroke="#b01818" stroke-width="1.6"/></g>
<path d="M32 408.5H26L32 403.5z" fill="#000"/>
<rect x="6" y="416.0" width="20" height="20" fill="#ebe8da"/>
<g transform="translate(6 416.0) scale(1.0)"><rect x="1.5" y="1.5" width="16" height="14" fill="url(#gb)" stroke="#1a1a1a" stroke-width="1.5"/><rect x="4" y="4.5" width="8" height="5" fill="none" stroke="#2a3ab0" stroke-width="1.6"/><path d="M14 10V19M9.5 14.5H18.5" stroke="#c01818" stroke-width="3.2"/><path d="M14 11V18M10.5 14.5H17.5" stroke="#3a70d0" stroke-width="1.4"/></g>
<path d="M32 436.0H26L32 431.0z" fill="#000"/>
<rect x="6" y="443.5" width="20" height="20" fill="#ebe8da"/>
<g transform="translate(6 443.5) scale(1.0)"><path d="M1.5 2.5H16V9L11 15H1.5Z" fill="url(#gb)" stroke="#b01818" stroke-width="1.5"/></g>
<path d="M32 463.5H26L32 458.5z" fill="#000"/>
<rect x="6" y="471.0" width="20" height="20" fill="#ebe8da"/>
<g transform="translate(6 471.0) scale(1.0)"><rect x="6.5" y="8" width="12" height="10" fill="#c0d8f0" stroke="#7a80c8" stroke-width="1.3"/><path d="M7 17.5V14Q10 11 12 13.5Q14 12 18 14V17.5Z" fill="#40a030"/><path d="M4 0.5V7.5M0.5 4H7.5" stroke="#a01818" stroke-width="1.3"/><rect x="2.5" y="2.5" width="3" height="3" fill="#3a5ac0" stroke="#a01818" stroke-width="0.8"/></g>
<path d="M32 491.0H26L32 486.0z" fill="#000"/>
<rect x="6" y="498.5" width="20" height="20" fill="#ebe8da"/>
<g transform="translate(6 498.5) scale(1.0)"><path d="M10 0.5L14 5H11.8V8.2H15V6L19.5 10L15 14V11.8H11.8V15H14L10 19.5L6 15H8.2V11.8H5V14L0.5 10L5 6V8.2H8.2V5H6Z" fill="#8a2a9a" stroke="#7a1010" stroke-width="1"/></g>
<path d="M32 518.5H26L32 513.5z" fill="#000"/>
<rect x="6" y="526.0" width="20" height="20" fill="#ebe8da"/>
<g transform="translate(6 526.0) scale(1.0)"><path d="M14 0V8M10 4H18" stroke="#b01818" stroke-width="1.2"/><circle cx="14" cy="4" r="1.8" fill="none" stroke="#b01818" stroke-width="1.2"/><path d="M4 15L12 6" stroke="#333" stroke-width="1" stroke-dasharray="1.5 1.5"/><path d="M1 17H15" stroke="#111" stroke-width="1.8"/><circle cx="16" cy="16.5" r="2.2" fill="#b8403a" stroke="#8a2a2a" stroke-width="0.5"/></g>
<path d="M32 546.0H26L32 541.0z" fill="#000"/>
<rect x="6" y="553.5" width="20" height="20" fill="#ebe8da"/>
<g transform="translate(6 553.5) scale(1.0)"><path d="M2.5 14.5L15.5 2" stroke="#222" stroke-width="1.3"/><circle cx="2.5" cy="14.5" r="2.2" fill="#b8403a" stroke="#8a2a2a" stroke-width="0.5"/><circle cx="15.5" cy="2" r="2.2" fill="#b8403a" stroke="#8a2a2a" stroke-width="0.5"/><rect x="6" y="13.5" width="3.5" height="3" fill="#2a8ae8"/><rect x="9.5" y="13.5" width="3.5" height="3" fill="#9a2ab8"/><rect x="13" y="13.5" width="3" height="3" fill="#f08040"/><rect x="16" y="13.5" width="3" height="3" fill="#28d028"/></g>
<path d="M32 573.5H26L32 568.5z" fill="#000"/>
<rect x="6" y="581.0" width="20" height="20" fill="#ebe8da"/>
<g transform="translate(6 581.0) scale(1.0)"><path d="M1.5 2.5H17.5V9.5L15.5 13.5L10 18L2.5 13.5L1.5 9.5Z" fill="url(#gb)" stroke="#1a1a1a" stroke-width="1.6"/><path d="M0.5 2.5H18.5" stroke="#b01818" stroke-width="1.8"/><circle cx="2" cy="13" r="2.1" fill="#b8403a" stroke="#8a2a2a" stroke-width="0.5"/><circle cx="15.5" cy="13" r="2.1" fill="#b8403a" stroke="#8a2a2a" stroke-width="0.5"/><circle cx="10" cy="17.5" r="2.1" fill="#b8403a" stroke="#8a2a2a" stroke-width="0.5"/><circle cx="1.5" cy="2.5" r="1.6" fill="#b8403a" stroke="#8a2a2a" stroke-width="0.5"/><circle cx="17.5" cy="2.5" r="1.6" fill="#b8403a" stroke="#8a2a2a" stroke-width="0.5"/></g>
<path d="M32 601.0H26L32 596.0z" fill="#000"/>
<rect x="6" y="608.5" width="20" height="20" fill="#ebe8da"/>
<g transform="translate(6 608.5) scale(1.0)"><path d="M1 1L8 8M8 1L1 8" stroke="#b01818" stroke-width="1.5"/><path d="M6 7L11 12" stroke="#555" stroke-width="1"/><circle cx="12.5" cy="13" r="2.4" fill="#b8403a" stroke="#8a2a2a" stroke-width="0.5"/></g>
<path d="M32 628.5H26L32 623.5z" fill="#000"/>
<rect x="6" y="638.5" width="1" height="4" fill="#a8a8a8"/>
<rect x="8.5" y="638.5" width="1" height="4" fill="#a8a8a8"/>
<rect x="11.0" y="638.5" width="1" height="4" fill="#a8a8a8"/>
<rect x="13.5" y="638.5" width="1" height="4" fill="#a8a8a8"/>
<rect x="16.0" y="638.5" width="1" height="4" fill="#a8a8a8"/>
<rect x="18.5" y="638.5" width="1" height="4" fill="#a8a8a8"/>
<rect x="21.0" y="638.5" width="1" height="4" fill="#a8a8a8"/>
<rect x="23.5" y="638.5" width="1" height="4" fill="#a8a8a8"/>
<rect x="26.0" y="638.5" width="1" height="4" fill="#a8a8a8"/>
<rect x="28.5" y="638.5" width="1" height="4" fill="#a8a8a8"/>
<rect x="6" y="650.5" width="20" height="20" fill="#ebe8da"/>
<g transform="translate(6 650.5) scale(1.0)"><path d="M7 11L14.5 1.5L17.5 3.8L10 13L6.5 14.5Z" fill="#e0b020" stroke="#6a5010" stroke-width="0.7"/><path d="M14.5 1.5L15.5 0.3L18.5 2.5L17.5 3.8Z" fill="#e08888"/><path d="M0 9Q1 16 5 13T11 14T16 13Q18 14 19 18" fill="none" stroke="#111" stroke-width="1.8"/></g>
<path d="M32 670.5H26L32 665.5z" fill="#000"/>
<rect x="6" y="678.0" width="20" height="20" fill="#ebe8da"/>
<g transform="translate(6 678.0) scale(1.0)"><rect x="1" y="2.5" width="17" height="13.5" fill="url(#gb)" stroke="#d07050" stroke-width="1.5"/><path d="M6.5 5H12.5V6.5H10.8V12H12.5V13.5H6.5V12H8.2V6.5H6.5Z" fill="#b83010"/></g>
<path d="M32 698.0H26L32 693.0z" fill="#000"/>
<rect x="6" y="705.5" width="20" height="20" fill="#ebe8da"/>
<g transform="translate(6 705.5) scale(1.0)"><path d="M3 2L5 5L3 8Z" fill="#222"/><path d="M4 5L1 17M4 5L7.5 17" stroke="#333" stroke-width="1.3"/><path d="M14 5V17" stroke="#333" stroke-width="2"/><circle cx="14.5" cy="3.5" r="2.2" fill="#ffffff" stroke="#2a80d0" stroke-width="1.3"/><path d="M0 18H16" stroke="#e08060" stroke-width="1.4"/></g>
<path d="M32 725.5H26L32 720.5z" fill="#000"/>
<rect x="6" y="733.0" width="20" height="20" fill="#ebe8da"/>
<g transform="translate(6 733.0) scale(1.0)"><rect x="1" y="2" width="16" height="16" fill="#e8eef8" stroke="#b01818" stroke-width="1.6"/><rect x="1.5" y="2.5" width="15" height="2" fill="#3a4aa0"/><path d="M3 8H14M3 11H14M3 14H14" stroke="#8aa0d8" stroke-width="1"/><path d="M8 13L15.5 3L18.5 5L11 14.5L7.5 15.5Z" fill="#e0b020" stroke="#6a5010" stroke-width="0.7"/><path d="M15.5 3L16.5 1.5L19.5 3.5L18.5 5Z" fill="#e08888"/></g>
<path d="M32 753.0H26L32 748.0z" fill="#000"/>
<rect x="6" y="760.5" width="20" height="20" fill="#ebe8da"/>
<g transform="translate(6 760.5) scale(1.0)"><path d="M1 7Q10 4 18 7V13.5Q10 11 1 13.5Z" fill="#c8d8f8" stroke="#b01818" stroke-width="1.6"/><path d="M9.5 0V20" stroke="#111" stroke-width="1.4"/></g>
<path d="M32 780.5H26L32 775.5z" fill="#000"/>
<rect x="6" y="788.0" width="20" height="20" fill="#ebe8da"/>
<g transform="translate(6 788.0) scale(1.0)"><path d="M7 11L14.5 1.5L17.5 3.8L10 13L6.5 14.5Z" fill="#e0b020" stroke="#6a5010" stroke-width="0.7"/><path d="M14.5 1.5L15.5 0.3L18.5 2.5L17.5 3.8Z" fill="#e08888"/><path d="M0 14Q4 18 8 15T15 14T19 15" fill="none" stroke="#3a5ab0" stroke-width="1.1"/><path d="M0 16Q4 20 8 17T15 16T19 17" fill="none" stroke="#b02a2a" stroke-width="1.1"/></g>
<path d="M32 808.0H26L32 803.0z" fill="#000"/>
<rect x="6" y="815.5" width="20" height="20" fill="#ebe8da"/>
<g transform="translate(6 815.5) scale(1.0)"><path d="M0.5 15L8 6.5H19M8 11H19" fill="none" stroke="#111" stroke-width="1.8"/></g>
<path d="M32 835.5H26L32 830.5z" fill="#000"/>
<rect x="6" y="843.0" width="20" height="20" fill="#ebe8da"/>
<g transform="translate(6 843.0) scale(1.0)"><path d="M0 5.5H20M0 14.5H20" stroke="#c01818" stroke-width="1.8"/><path d="M4 3V17M10 3V17M16 3V17" stroke="#222" stroke-width="0.8"/><path d="M2 10H18" stroke="#2020c0" stroke-width="2" stroke-dasharray="2 1.5"/></g>
<path d="M32 863.0H26L32 858.0z" fill="#000"/>
<rect x="6" y="870.5" width="20" height="20" fill="#ebe8da"/>
<g transform="translate(6 870.5) scale(1.0)"><rect x="1" y="2.5" width="10" height="3" rx="1.5" fill="#9a98c8"/><rect x="4.5" y="4" width="3" height="9" fill="#8a88b8"/><rect x="1" y="12" width="10" height="3.5" rx="1.5" fill="#9a98c8"/><path d="M0 13.5H19" stroke="#8a88b8" stroke-width="1"/><path d="M9 11L16 1.5L19 3.5L12 13L8.5 14Z" fill="#e0b020" stroke="#6a5010" stroke-width="0.7"/></g>
<path d="M32 890.5H26L32 885.5z" fill="#000"/>
<rect x="6" y="898.0" width="20" height="20" fill="#ebe8da"/>
<g transform="translate(6 898.0) scale(1.0)"><path d="M0 4V18H3L7 12Z" fill="#e01818"/><path d="M2 2V15L6 19" fill="none" stroke="#3a5ad0" stroke-width="1.3"/><path d="M4 6Q5 14 12 14H20" fill="none" stroke="#a8c8e8" stroke-width="3"/><path d="M7 1V9Q8 12 12 12H20M7 19H11M14 17H20" fill="none" stroke="#111" stroke-width="1.5"/></g>
<path d="M32 918.0H26L32 913.0z" fill="#000"/>
<rect x="6" y="925.5" width="20" height="20" fill="#ebe8da"/>
<g transform="translate(6 925.5) scale(1.0)"><rect x="0.5" y="0.5" width="9" height="7" fill="#f4d860" opacity="0.9"/><path d="M5 0V8M1 4H9M2 1L8 7M8 1L2 7" stroke="#fff8c0" stroke-width="0.8"/><path d="M9.5 6.2H17.5Q18.8 6.2 18.8 7.5V17Q18.8 18.2 17.5 18.2H6.8Q5.5 18.2 5.5 17V12L8.5 7Q9 6.2 9.5 6.2Z" fill="#c4d8e0" stroke="#505050" stroke-width="1.8"/><path d="M7.5 17L17 7.5M8.5 9L16.5 17" stroke="#f4f8fa" stroke-width="1.3"/><path d="M8.5 9L16.5 17M7.5 17L17 7.5" stroke="#808890" stroke-width="0.5"/></g>
<path d="M32 945.5H26L32 940.5z" fill="#000"/>
<rect x="6" y="953.0" width="20" height="20" fill="#ebe8da"/>
<g transform="translate(6 953.0) scale(1.0)"><rect x="1" y="7.3" width="2.8" height="2.8" fill="#f020a0"/><rect x="1" y="11.3" width="2.8" height="2.8" fill="#109088"/><rect x="1" y="15" width="2.8" height="2.8" fill="#f08040"/><path d="M9.5 6.2H17.5Q18.8 6.2 18.8 7.5V17Q18.8 18.2 17.5 18.2H6.8Q5.5 18.2 5.5 17V12L8.5 7Q9 6.2 9.5 6.2Z" fill="#c4d8e0" stroke="#505050" stroke-width="1.8"/><path d="M7.5 17L17 7.5M8.5 9L16.5 17" stroke="#f4f8fa" stroke-width="1.3"/><path d="M8.5 9L16.5 17M7.5 17L17 7.5" stroke="#808890" stroke-width="0.5"/></g>
<path d="M32 973.0H26L32 968.0z" fill="#000"/>
<rect x="40" y="100" width="935" height="815" fill="#f0f0f0"/>
<rect x="40" y="100" width="935" height="2" fill="#6d6d6d"/>
<rect x="40" y="100" width="2" height="814" fill="#6d6d6d"/>
<rect x="42" y="102" width="933" height="1" fill="#ffffff"/>
<rect x="42" y="102" width="1" height="811" fill="#ffffff"/>
<rect x="44" y="142" width="931" height="769" fill="#b7b7b7"/>
<rect x="42" y="911" width="933" height="2" fill="#ffffff"/>
<rect x="40" y="913" width="935" height="2" fill="#707070"/>
<rect x="48" y="108" width="29" height="29" fill="#f0f0f0"/>
<rect x="48" y="108" width="29" height="1" fill="#ffffff"/>
<rect x="48" y="108" width="1" height="29" fill="#ffffff"/>
<path d="M77 108V137H48l2 -2H75V110z" fill="#6b6b6b"/>
<g transform="translate(52 112) scale(1.0)"><rect x="1" y="1" width="17" height="17" fill="#ffffff" stroke="#b01818" stroke-width="1.6"/><rect x="3" y="3" width="6" height="6" fill="#8ab4dc"/><rect x="10.5" y="3" width="6" height="6" fill="#8ab4dc"/><rect x="3" y="10.5" width="6" height="6" fill="#8ab4dc"/><rect x="5.5" y="8" width="14.5" height="12.5" fill="#ffffff" stroke="#b01818" stroke-width="1.6"/><path d="M8 11.5H17M8 14H17M13 17.5H17" stroke="#8aa8d0" stroke-width="1"/></g>
<rect x="81" y="108" width="29" height="29" fill="#f0f0f0"/>
<rect x="81" y="108" width="29" height="1" fill="#ffffff"/>
<rect x="81" y="108" width="1" height="29" fill="#ffffff"/>
<path d="M110 108V137H81l2 -2H108V110z" fill="#6b6b6b"/>
<rect x="83" y="110" width="24" height="24" fill="#ebe8da"/>
<g transform="translate(85 112) scale(1.0)"><path d="M7 3.2H13.3V7.8H18.4V13.5H13.3V19H7V13.5H2V7.8H7Z" fill="#b01818"/><path d="M6.1 2.2H12.3V6.8H17.4V12.5H12.3V18H6.1V12.5H1V6.8H6.1Z" fill="#a8d4f4" stroke="#b83030" stroke-width="0.9"/></g>
<rect x="113" y="108" width="29" height="29" fill="#f0f0f0"/>
<rect x="113" y="108" width="29" height="1" fill="#ffffff"/>
<rect x="113" y="108" width="1" height="29" fill="#ffffff"/>
<path d="M142 108V137H113l2 -2H140V110z" fill="#6b6b6b"/>
<rect x="115" y="110" width="24" height="24" fill="#ebe8da"/>
<g transform="translate(117 112) scale(1.0)"><rect x="2.8" y="7.8" width="15.9" height="6.2" fill="#b01818"/><rect x="1.8" y="6.8" width="15.9" height="6.2" fill="#a8cdf4" stroke="#b83030" stroke-width="0.9"/></g>
<rect x="146" y="108" width="29" height="29" fill="#f0f0f0"/>
<rect x="146" y="108" width="29" height="1" fill="#ffffff"/>
<rect x="146" y="108" width="1" height="29" fill="#ffffff"/>
<path d="M175 108V137H146l2 -2H173V110z" fill="#6b6b6b"/>
<rect x="148" y="110" width="24" height="24" fill="#ebe8da"/>
<g transform="translate(150 112) scale(1.0)"><path d="M14.4 14.0L21.6 21.200000000000003" stroke="#c07830" stroke-width="2.6" stroke-linecap="round"/><circle cx="8.8" cy="8.4" r="8" fill="url(#gs)" stroke="#606878" stroke-width="1.6"/><path d="M9 3V14M3.5 8.5H14.5" stroke="#b01828" stroke-width="1.6"/><path d="M9 2L11 4.5H7ZM9 15L11 12.5H7ZM2.5 8.5L5 6.5V10.5ZM15.5 8.5L13 6.5V10.5Z" fill="#a020a0"/></g>
<rect x="178" y="108" width="29" height="29" fill="#707070"/>
<rect x="180" y="110" width="25" height="25" fill="#f0f0f0"/>
<rect x="181" y="111" width="23" height="23" fill="#ebe8da"/>
<g transform="translate(182 112) scale(1.0)"><path d="M1.5 5.5Q2.5 3 5 4L7 3Q9 2.5 10 4L12 5Q14 5.5 14 8L15 12L17 15L13.5 18.5L10 16L5 12L2.5 9Q0.5 7 1.5 5.5Z" fill="#e8a8a8" stroke="#b07878" stroke-width="0.8"/><path d="M4 6L9 10M6 4.5L11 8.5M9 4L13 7.5" stroke="#c88888" stroke-width="0.7"/><path d="M13 15.5L17.5 12L21 17.5L20 21H14.5L12.5 18Z" fill="#2f64b0"/><path d="M17 1V11M12 6H22" stroke="#c01818" stroke-width="1.6"/><path d="M17 0L19 3H15ZM17 12L19 9H15ZM11 6L14 4V8ZM23 6L20 4V8Z" fill="#c01818"/><circle cx="17" cy="6" r="1.2" fill="#1a5aa0"/></g>
<rect x="211" y="108" width="29" height="29" fill="#f0f0f0"/>
<rect x="211" y="108" width="29" height="1" fill="#ffffff"/>
<rect x="211" y="108" width="1" height="29" fill="#ffffff"/>
<path d="M240 108V137H211l2 -2H238V110z" fill="#6b6b6b"/>
<rect x="213" y="110" width="24" height="24" fill="#ebe8da"/>
<g transform="translate(215 112) scale(1.0)"><path d="M12.6 12.2L18.900000000000002 18.5" stroke="#c07830" stroke-width="2.6" stroke-linecap="round"/><circle cx="7.7" cy="7.3" r="7" fill="url(#gs)" stroke="#606878" stroke-width="1.6"/><path d="M20 2V8M17 5H23M17 10H23" stroke="#c01818" stroke-width="1.8"/></g>
<rect x="243" y="108" width="29" height="29" fill="#f0f0f0"/>
<rect x="243" y="108" width="29" height="1" fill="#ffffff"/>
<rect x="243" y="108" width="1" height="29" fill="#ffffff"/>
<path d="M272 108V137H243l2 -2H270V110z" fill="#6b6b6b"/>
<rect x="245" y="110" width="24" height="24" fill="#ebe8da"/>
<g transform="translate(247 112) scale(1.0)"><path d="M14.1 13.399999999999999L21.3 20.6" stroke="#c07830" stroke-width="2.6" stroke-linecap="round"/><circle cx="8.5" cy="7.8" r="8" fill="url(#gs)" stroke="#606878" stroke-width="1.6"/><path d="M4 3.5L7.5 7M13 3.5L9.5 7M4 12L7.5 8.5M13 12L9.5 8.5" stroke="#c01818" stroke-width="2"/><path d="M8 6.5V4M8 6.5H5.5M9 6.5V4M9 6.5H11.5M8 9V11.5M8 9H5.5M9 9V11.5M9 9H11.5" stroke="#c01818" stroke-width="1.4"/></g>
<rect x="275" y="108" width="29" height="29" fill="#f0f0f0"/>
<rect x="275" y="108" width="29" height="1" fill="#ffffff"/>
<rect x="275" y="108" width="1" height="29" fill="#ffffff"/>
<path d="M304 108V137H275l2 -2H302V110z" fill="#6b6b6b"/>
<rect x="277" y="110" width="24" height="24" fill="#ebe8da"/>
<g transform="translate(279 112) scale(1.0)"><path d="M14.299999999999999 13.399999999999999L21.5 20.6" stroke="#c07830" stroke-width="2.6" stroke-linecap="round"/><circle cx="8.7" cy="7.8" r="8" fill="url(#gs)" stroke="#606878" stroke-width="1.6"/><path d="M15 1Q9 1 8 8" fill="none" stroke="#2a70c0" stroke-width="1.8"/><path d="M5 5L9 11L11.5 5Z" fill="#c01818"/></g>
<rect x="308" y="108" width="29" height="29" fill="#f0f0f0"/>
<rect x="308" y="108" width="29" height="1" fill="#ffffff"/>
<rect x="308" y="108" width="1" height="29" fill="#ffffff"/>
<path d="M337 108V137H308l2 -2H335V110z" fill="#6b6b6b"/>
<rect x="310" y="110" width="24" height="24" fill="#ebe8da"/>
<g transform="translate(312 112) scale(1.0)"><path d="M0.5 6.5L5.5 11L14 1.5" fill="none" stroke="#b01818" stroke-width="3.6"/><path d="M0.5 6.5L5.5 11L14 1.5" fill="none" stroke="#80c8f0" stroke-width="1.8"/><path d="M8 9L19.5 20M19.5 9L8 20" stroke="#b01818" stroke-width="3.6"/><path d="M8 9L19.5 20M19.5 9L8 20" stroke="#80c8f0" stroke-width="1.8"/></g>
<rect x="340" y="108" width="29" height="29" fill="#f0f0f0"/>
<rect x="340" y="108" width="29" height="1" fill="#ffffff"/>
<rect x="340" y="108" width="1" height="29" fill="#ffffff"/>
<path d="M369 108V137H340l2 -2H367V110z" fill="#6b6b6b"/>
<rect x="342" y="110" width="24" height="24" fill="#ebe8da"/>
<g transform="translate(344 112) scale(1.0)"><path d="M2 8L6 5L16 15L19 19L15 18Z" fill="#404040"/><path d="M2 8L6 5L9 8L5 11Z" fill="#c08040"/><path d="M19 1Q13 1 12 9" fill="none" stroke="#2a70c0" stroke-width="2"/><path d="M9 6L12 12L15 6Z" fill="#c01818"/></g>
<rect x="373" y="108" width="29" height="29" fill="#f0f0f0"/>
<rect x="373" y="108" width="29" height="1" fill="#ffffff"/>
<rect x="373" y="108" width="1" height="29" fill="#ffffff"/>
<path d="M402 108V137H373l2 -2H400V110z" fill="#6b6b6b"/>
<rect x="375" y="110" width="24" height="24" fill="#ebe8da"/>
<g transform="translate(377 112) scale(1.0)"><path d="M5.6 1.7H11.5L14.3 4.5V10H5.6Z" fill="#dceaf8" stroke="#4a70c8" stroke-width="1"/><path d="M2 10.5L5 7.5H17L19 10V18H2Z" fill="#d8d0c8" stroke="#a01818" stroke-width="1.6"/><path d="M3 11.2H18" stroke="#e8c830" stroke-width="1.3"/><path d="M3 16.3H18" stroke="#e8c830" stroke-width="1.6"/><rect x="4" y="12.8" width="2.2" height="1.8" fill="#20c020"/><path d="M7 13.7H17" stroke="#8aa0b8" stroke-width="1.2"/></g>
<rect x="405" y="108" width="29" height="29" fill="#f0f0f0"/>
<rect x="405" y="108" width="29" height="1" fill="#ffffff"/>
<rect x="405" y="108" width="1" height="29" fill="#ffffff"/>
<path d="M434 108V137H405l2 -2H432V110z" fill="#6b6b6b"/>
<rect x="407" y="110" width="24" height="24" fill="#ebe8da"/>
<g transform="translate(409 112) scale(1.0)"><rect x="1.5" y="3" width="14" height="11" fill="#f0f4f8" stroke="#4a80c8" stroke-width="1.4"/><path d="M6 8H16L19.5 11.5V19H6Z" fill="url(#gb)" stroke="#b01818" stroke-width="1.6"/></g>
<rect x="438" y="108" width="29" height="29" fill="#f0f0f0"/>
<rect x="438" y="108" width="29" height="1" fill="#ffffff"/>
<rect x="438" y="108" width="1" height="29" fill="#ffffff"/>
<path d="M467 108V137H438l2 -2H465V110z" fill="#6b6b6b"/>
<rect x="440" y="110" width="24" height="24" fill="#ebe8da"/>
<g transform="translate(442 112) scale(1.0)"><rect x="2" y="2" width="17" height="17" fill="#c8dcf0" stroke="#9a1010" stroke-width="1.6"/><rect x="3" y="3" width="3" height="15" fill="#e8d060"/><rect x="8" y="4" width="3" height="3" fill="#3a5a90"/><rect x="13" y="4" width="3" height="3" fill="#3a5a90"/><rect x="8" y="9" width="3" height="3" fill="#3a5a90"/><rect x="13" y="9" width="3" height="3" fill="#3a5a90"/><rect x="8" y="14" width="3" height="3" fill="#3a5a90"/><rect x="13" y="14" width="3" height="3" fill="#e8c020"/></g>
<rect x="470" y="108" width="29" height="29" fill="#f0f0f0"/>
<rect x="470" y="108" width="29" height="1" fill="#ffffff"/>
<rect x="470" y="108" width="1" height="29" fill="#ffffff"/>
<path d="M499 108V137H470l2 -2H497V110z" fill="#6b6b6b"/>
<rect x="472" y="110" width="24" height="24" fill="#ebe8da"/>
<g transform="translate(474 112) scale(1.0)"><path d="M10.5 1L13.2 7.3L20 7.8L14.8 12.2L16.4 19L10.5 15.4L4.6 19L6.2 12.2L1 7.8L7.8 7.3Z" fill="#f8d820" stroke="#c89010" stroke-width="1.2"/></g>
<rect x="503" y="108" width="29" height="29" fill="#f0f0f0"/>
<rect x="503" y="108" width="29" height="1" fill="#ffffff"/>
<rect x="503" y="108" width="1" height="29" fill="#ffffff"/>
<path d="M532 108V137H503l2 -2H530V110z" fill="#6b6b6b"/>
<rect x="505" y="110" width="24" height="24" fill="#ebe8da"/>
<g transform="translate(507 112) scale(1.0)"><path d="M10.5 1L13.2 7.3L20 7.8L14.8 12.2L16.4 19L10.5 15.4L4.6 19L6.2 12.2L1 7.8L7.8 7.3Z" fill="#20a8e8" stroke="#c8a040" stroke-width="1.2"/></g>
<rect x="535" y="108" width="29" height="29" fill="#f0f0f0"/>
<rect x="535" y="108" width="29" height="1" fill="#ffffff"/>
<rect x="535" y="108" width="1" height="29" fill="#ffffff"/>
<path d="M564 108V137H535l2 -2H562V110z" fill="#6b6b6b"/>
<rect x="537" y="110" width="24" height="24" fill="#ebe8da"/>
<g transform="translate(539 112) scale(1.0)"><rect x="0.5" y="1.5" width="16" height="18" fill="#e2e2e2" stroke="#d0d0d0" stroke-width="1"/><path d="M11.5 1.5V19.5M0.5 11.5H16.5" stroke="#cdcdcd" stroke-width="1"/><rect x="1.3" y="2.3" width="10.5" height="9.5" fill="#e6e6e6" stroke="#3a3a3a" stroke-width="1.6"/></g>
<g fill="none" stroke="#444444" stroke-width="1" shape-rendering="crispEdges">
<path d="M102.6 579.5L114.9 370.3L448 248.4L760 328.6L800 420L720.6 493.8L684.7 558L422.6 474.9Z"/>
</g>
<g stroke="#3c3cc4" stroke-width="1.4">
<path d="M176.5 345.6H184.5M180.5 341.6V349.6"/>
<path d="M244.2 321.5H252.2M248.2 317.5V325.5"/>
<path d="M309.8 296.9H317.8M313.8 292.9V300.9"/>
<path d="M376.7 273.1H384.7M380.7 269.1V277.1"/>
</g>
<rect x="577.5" y="274.5" width="20.5" height="20" fill="none" stroke="#5c62b4" stroke-width="1.5"/>
<path d="M585.5 296.5V315.5L589.5 311.5L593 319L596.5 317.5L593 310.5H599.5Z" fill="#ffffff" stroke="#000" stroke-width="1"/>
<path d="M536 175.5H732V235.5H634.5L586.5 271L569 235.5H536Z" fill="#ffffff" stroke="#5a5fa8" stroke-width="2"/>
<text x="633.3" y="197.5" font-size="20" fill="#000" textLength="175" lengthAdjust="spacingAndGlyphs" text-anchor="middle">Pick and Accept the</text>
<text x="633.65" y="220.5" font-size="20" fill="#000" textLength="153" lengthAdjust="spacingAndGlyphs" text-anchor="middle">segment required</text>
<rect x="718" y="294" width="182" height="534" fill="#000" opacity="0.18" filter="url(#sh)"/>
<rect x="721" y="297" width="175" height="38" fill="#ffffff"/>
<rect x="721" y="335" width="175" height="488.5" fill="#f0f0f0"/>
<text x="731.5" y="321" font-size="15" fill="#9a9a9a">Information</text>
<rect x="870" y="306" width="25" height="25" fill="#e6e6e6"/>
<path d="M879.5 315.5L885.5 321.5M885.5 315.5L879.5 321.5" stroke="#eeeeee" stroke-width="1.6"/>
<clipPath id="pc"><rect x="721" y="335" width="175" height="420"/></clipPath>
<clipPath id="sc"><rect x="723" y="757" width="170" height="62"/></clipPath>
<text x="724" y="351.0" font-size="15.5" fill="#1b1b1b" stroke="#1b1b1b" stroke-width="0.3" textLength="50.3" lengthAdjust="spacingAndGlyphs" clip-path="url(#pc)">General</text>
<text x="731.5" y="372.2" font-size="15.5" fill="#1b1b1b" stroke="#1b1b1b" stroke-width="0.3" textLength="90.7" lengthAdjust="spacingAndGlyphs" clip-path="url(#pc)">Model = CAD</text>
<text x="731.5" y="393.4" font-size="15.5" fill="#1b1b1b" stroke="#1b1b1b" stroke-width="0.3" textLength="88.5" lengthAdjust="spacingAndGlyphs" clip-path="url(#pc)">Name = LINE</text>
<text x="731.5" y="414.6" font-size="15.5" fill="#1b1b1b" stroke="#1b1b1b" stroke-width="0.3" textLength="86.4" lengthAdjust="spacingAndGlyphs" clip-path="url(#pc)">Type = Super</text>
<text x="731.5" y="435.8" font-size="15.5" fill="#1b1b1b" stroke="#1b1b1b" stroke-width="0.3" textLength="91.3" lengthAdjust="spacingAndGlyphs" clip-path="url(#pc)">Type like = 3d</text>
<text x="731.5" y="457.0" font-size="15.5" fill="#1b1b1b" stroke="#1b1b1b" stroke-width="0.3" textLength="125" lengthAdjust="spacingAndGlyphs" clip-path="url(#pc)">Colour = dark blue</text>
<text x="731.5" y="478.2" font-size="15.5" fill="#1b1b1b" stroke="#1b1b1b" stroke-width="0.3" textLength="86.2" lengthAdjust="spacingAndGlyphs" clip-path="url(#pc)">Line style = 1</text>
<text x="731.5" y="499.4" font-size="15.5" fill="#1b1b1b" stroke="#1b1b1b" stroke-width="0.3" textLength="85.6" lengthAdjust="spacingAndGlyphs" clip-path="url(#pc)">Pt/line = line</text>
<text x="731.5" y="520.6" font-size="15.5" fill="#1b1b1b" stroke="#1b1b1b" stroke-width="0.3" textLength="84.2" lengthAdjust="spacingAndGlyphs" clip-path="url(#pc)">Closed = Yes</text>
<text x="731.5" y="541.8" font-size="15.5" fill="#1b1b1b" stroke="#1b1b1b" stroke-width="0.3" textLength="58.8" lengthAdjust="spacingAndGlyphs" clip-path="url(#pc)"># pts = 6</text>
<text x="731.5" y="563.0" font-size="15.5" fill="#1b1b1b" stroke="#1b1b1b" stroke-width="0.3" textLength="104" lengthAdjust="spacingAndGlyphs" clip-path="url(#pc)">Area = 2079.091</text>
<text x="731.5" y="584.2" font-size="15.5" fill="#1b1b1b" stroke="#1b1b1b" stroke-width="0.3" textLength="101.2" lengthAdjust="spacingAndGlyphs" clip-path="url(#pc)"># attributes = 3</text>
<text x="731.5" y="605.4" font-size="15.5" fill="#1b1b1b" stroke="#1b1b1b" stroke-width="0.3" textLength="113.3" lengthAdjust="spacingAndGlyphs" clip-path="url(#pc)">Length = 215.664</text>
<text x="731.5" y="626.6" font-size="15.5" fill="#1b1b1b" stroke="#1b1b1b" stroke-width="0.3" textLength="115.3" lengthAdjust="spacingAndGlyphs" clip-path="url(#pc)">Locks = Read (-1)</text>
<text x="731.5" y="647.8" font-size="15.5" fill="#1b1b1b" stroke="#1b1b1b" stroke-width="0.3" textLength="75.8" lengthAdjust="spacingAndGlyphs" clip-path="url(#pc)">Line snap =</text>
<text x="731.5" y="669.0" font-size="15.5" fill="#1b1b1b" stroke="#1b1b1b" stroke-width="0.3" textLength="97.5" lengthAdjust="spacingAndGlyphs" clip-path="url(#pc)">X = 212934.161</text>
<text x="731.5" y="690.2" font-size="15.5" fill="#1b1b1b" stroke="#1b1b1b" stroke-width="0.3" textLength="98.4" lengthAdjust="spacingAndGlyphs" clip-path="url(#pc)">Y = 612442.039</text>
<text x="731.5" y="711.4" font-size="15.5" fill="#1b1b1b" stroke="#1b1b1b" stroke-width="0.3" textLength="107.4" lengthAdjust="spacingAndGlyphs" clip-path="url(#pc)">Prof ch = 60.060</text>
<text x="731.5" y="732.6" font-size="15.5" fill="#1b1b1b" stroke="#1b1b1b" stroke-width="0.3" textLength="155.6" lengthAdjust="spacingAndGlyphs" clip-path="url(#pc)">Bearing = 104°33'12.86&quot;</text>
<text x="731.5" y="755.5" font-size="15.5" fill="#1b1b1b" stroke="#1b1b1b" stroke-width="0.3" clip-path="url(#pc)">+ve =</text>
<text x="724" y="775.0" font-size="15.5" fill="#1b1b1b" stroke="#1b1b1b" stroke-width="0.3" textLength="58.8" lengthAdjust="spacingAndGlyphs" clip-path="url(#sc)">Segment</text>
<text x="731.5" y="796.2" font-size="15.5" fill="#1b1b1b" stroke="#1b1b1b" stroke-width="0.3" textLength="142.9" lengthAdjust="spacingAndGlyphs" clip-path="url(#sc)">Type = horizontal line</text>
<text x="731.5" y="817.4" font-size="15.5" fill="#1b1b1b" stroke="#1b1b1b" stroke-width="0.3" textLength="106.2" lengthAdjust="spacingAndGlyphs" clip-path="url(#sc)">Length = 44.829</text>
<rect x="721.65" y="755.25" width="172.6" height="66.6" fill="none" stroke="#5157a6" stroke-width="3.5"/>
<path d="M352 763.5H658.5V774.5L719.5 783.3L658.5 793V823H352Z" fill="#ffffff" stroke="#5a5fa8" stroke-width="2"/>
<text x="504.75" y="785.5" font-size="20" fill="#000" textLength="284" lengthAdjust="spacingAndGlyphs" text-anchor="middle">Segment details are listed at the</text>
<text x="505.5" y="808.5" font-size="20" fill="#000" textLength="274.5" lengthAdjust="spacingAndGlyphs" text-anchor="middle">bottom of the Information panel</text>
<rect x="40" y="915.5" width="935" height="29" fill="#f7f7f7"/>
<rect x="40" y="972" width="935" height="27" fill="#f7f7f7"/>
<rect x="40" y="998.5" width="935" height="1.5" fill="#d9d9d9"/>
<rect x="41" y="915" width="43" height="28" fill="#f5f5f5"/>
<rect x="84" y="915" width="1" height="29" fill="#202020"/>
<rect x="41" y="942" width="44" height="1.5" fill="#202020"/>
<g transform="translate(45 918.5) scale(1.0)"><rect x="1" y="1" width="18" height="18" fill="#bfe3e6" stroke="#d02424" stroke-width="2"/><path d="M4 5Q8 2 12 5T17 6Q15 10 16 13Q12 14 9 12Q6 15 4 11Z" fill="#ffffff" stroke="#7ab0d8" stroke-width="1" stroke-dasharray="1.5 1"/><circle cx="4" cy="4.5" r="1.3" fill="#8a2aa0"/><circle cx="4" cy="11.5" r="1.3" fill="#8a2aa0"/><circle cx="15" cy="12" r="1.3" fill="#1a1a8a"/><circle cx="10" cy="12" r="1" fill="#2a7a2a"/><path d="M5.5 14V19M3 16.5H8" stroke="#1a8a1a" stroke-width="1.6"/><path d="M14.5 13.5V18.5M12 16H17" stroke="#ee1a1a" stroke-width="1.6"/></g>
<text x="68" y="935" font-size="15.5" fill="#1b1b1b" stroke="#1b1b1b" stroke-width="0.3" font-weight="bold">1</text>
<g transform="translate(89.5 918.5) scale(1.0)"><rect x="0.8" y="0.8" width="18.4" height="18.4" fill="url(#gw)" stroke="#1cc01c" stroke-width="1.6"/><path d="M1.5 4.5Q5.5 10 10 6T18.5 5.5" fill="none" stroke="#a83434" stroke-width="2"/><path d="M1.5 9Q5.5 14.5 10 10.5T18.5 10" fill="none" stroke="#5a7ad8" stroke-width="2.4"/><path d="M1.5 6.8Q5.5 12.3 10 8.3T18.5 7.8" fill="none" stroke="#f4f4f4" stroke-width="1.2"/><path d="M1.5 13Q5.5 18.5 10 14.5T18.5 14" fill="none" stroke="#a83434" stroke-width="2"/></g>
<text x="112" y="935" font-size="15" fill="#999999">2</text>
<rect x="128" y="920" width="1" height="17" fill="#b0b0b0"/>
<g transform="translate(133.5 918.5) scale(1.0)"><rect x="1" y="1" width="18" height="18" fill="#bfe3e6" stroke="#d02424" stroke-width="2"/><path d="M4 5Q8 2 12 5T17 6Q15 10 16 13Q12 14 9 12Q6 15 4 11Z" fill="#ffffff" stroke="#7ab0d8" stroke-width="1" stroke-dasharray="1.5 1"/><circle cx="4" cy="4.5" r="1.3" fill="#8a2aa0"/><circle cx="4" cy="11.5" r="1.3" fill="#8a2aa0"/><circle cx="15" cy="12" r="1.3" fill="#1a1a8a"/><circle cx="10" cy="12" r="1" fill="#2a7a2a"/><path d="M5.5 14V19M3 16.5H8" stroke="#1a8a1a" stroke-width="1.6"/><path d="M14.5 13.5V18.5M12 16H17" stroke="#ee1a1a" stroke-width="1.6"/></g>
<text x="156" y="935" font-size="15" fill="#999999">3</text>
<rect x="172" y="920" width="1" height="17" fill="#b0b0b0"/>
<g transform="translate(177 918.5) scale(1.0)"><rect x="0.8" y="0.8" width="18.4" height="18.4" fill="url(#gw)" stroke="#1cc01c" stroke-width="1.6"/><path d="M1.5 4.5Q5.5 10 10 6T18.5 5.5" fill="none" stroke="#a83434" stroke-width="2"/><path d="M1.5 9Q5.5 14.5 10 10.5T18.5 10" fill="none" stroke="#5a7ad8" stroke-width="2.4"/><path d="M1.5 6.8Q5.5 12.3 10 8.3T18.5 7.8" fill="none" stroke="#f4f4f4" stroke-width="1.2"/><path d="M1.5 13Q5.5 18.5 10 14.5T18.5 14" fill="none" stroke="#a83434" stroke-width="2"/></g>
<text x="200" y="935" font-size="15" fill="#999999">LS</text>
<rect x="223" y="920" width="1" height="17" fill="#b0b0b0"/>
<text x="42.7" y="965" font-size="15.5" fill="#1b1b1b" stroke="#1b1b1b" stroke-width="0.3" textLength="144.3" lengthAdjust="spacingAndGlyphs">searching Model CAD</text>
<rect x="43.5" y="974.5" width="165" height="30" fill="#f2f2f2" stroke="#a9a9a9" stroke-width="1"/>
<text x="49.5" y="992.5" font-size="15" fill="#8a8a8a" textLength="106" lengthAdjust="spacingAndGlyphs">Output Window</text>
<rect x="226.5" y="974.5" width="176" height="30" fill="#f2f2f2" stroke="#a9a9a9" stroke-width="1"/>
<text x="233" y="992.5" font-size="15" fill="#8a8a8a" textLength="117" lengthAdjust="spacingAndGlyphs">Background tasks</text>
</svg></body></html>
